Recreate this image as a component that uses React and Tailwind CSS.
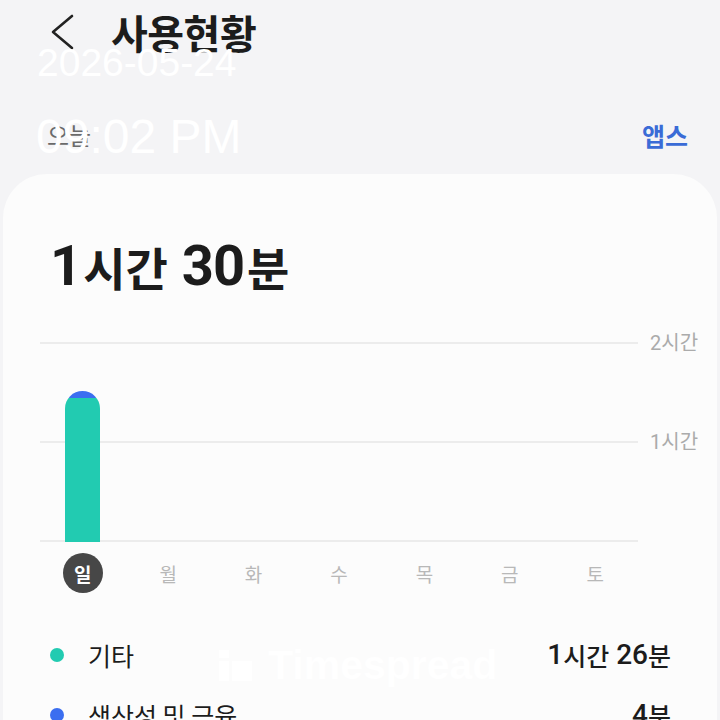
import React from "react";

const KR = { fontFamily: '"Noto Sans CJK KR", "Noto Sans", sans-serif' };

function Num({ children, className }) {
  return (
    <span className={className} style={{ fontFamily: 'Roboto, "Noto Sans CJK KR", sans-serif' }}>
      {children}
    </span>
  );
}

const days = ["일", "월", "화", "수", "목", "금", "토"];

export default function App() {
  return (
    <div
      className="relative w-[720px] h-[720px] overflow-hidden bg-[#f4f4f6] text-[#1c1c1c]"
      style={KR}
    >
      {/* header */}
      <div className="flex items-center h-[64px] pl-[50px]">
        <svg width="26" height="36" viewBox="0 0 26 36" className="shrink-0">
          <polyline
            points="22,2 3,18 22,34"
            fill="none"
            stroke="#222"
            strokeWidth="2.6"
            strokeLinecap="round"
            strokeLinejoin="round"
          />
        </svg>
        <div className="ml-[35px] text-[40px] font-bold leading-none tracking-[-0.5px]">사용현황</div>
      </div>

      {/* sub row */}
      <div className="mt-[51px] h-[40px] flex items-center justify-between pl-[47px] pr-[32px]">
        <div className="text-[24px] leading-none text-[#6a6a6a]">오늘</div>
        <div className="text-[25px] leading-none font-semibold text-[#3a6bd6]">앱스</div>
      </div>

      {/* card */}
      <div className="mt-[19px] mx-[3px] rounded-t-[44px] bg-[#fcfcfc] h-[600px]">
        <div className="pt-[64px] pl-[47px] h-[56px] box-content flex items-center font-bold leading-none">
          <Num className="text-[56px] font-bold">1</Num>
          <span className="text-[46px] ml-[1px]">시간</span>
          <Num className="text-[56px] font-bold ml-[14px] tracking-[-1px]">30</Num>
          <span className="text-[46px] ml-[3px]">분</span>
        </div>

        {/* chart */}
        <div className="mt-[48px] pl-[37px] flex">
          <div className="relative w-[598px] h-[200px]">
            <div className="absolute inset-0 flex flex-col justify-between">
              <div className="h-[2px] bg-[#ececec]" />
              <div className="h-[2px] bg-[#ececec]" />
              <div className="h-[2px] bg-[#ececec]" />
            </div>
            <div className="absolute inset-0 flex items-end">
              {days.map((d, i) => (
                <div key={d} className="flex-1 flex justify-center items-end h-full">
                  {i === 0 && (
                    <div className="w-[35px] h-[151px] rounded-t-[18px] overflow-hidden flex flex-col">
                      <div className="h-[7px] bg-[#3b6ef0]" />
                      <div className="flex-1 bg-[#22cbb1]" />
                    </div>
                  )}
                </div>
              ))}
            </div>
          </div>
          <div className="relative w-[70px] h-[200px] text-[20px] text-[#ababab] leading-none">
            <div className="absolute left-[12px] top-[-10px]">
              <Num>2</Num>시간
            </div>
            <div className="absolute left-[12px] top-[89px]">
              <Num>1</Num>시간
            </div>
          </div>
        </div>

        {/* day labels */}
        <div className="mt-[11px] pl-[37px] w-[635px] flex h-[40px]">
          {days.map((d, i) => (
            <div key={d} className="flex-1 flex justify-center items-center">
              {i === 0 ? (
                <div className="w-[40px] h-[40px] rounded-full bg-[#474747] text-white flex items-center justify-center text-[19px] font-bold leading-none">
                  {d}
                </div>
              ) : (
                <div className="text-[19px] text-[#b8b8b8] leading-none">{d}</div>
              )}
            </div>
          ))}
        </div>

        {/* legend */}
        <div className="mt-[32px] pl-[47px] pr-[46px]">
          <div className="h-[60px] flex items-center">
            <div className="w-[14px] h-[14px] rounded-full bg-[#22cbb1]" />
            <div className="ml-[24px] text-[25px] leading-none">기타</div>
            <div className="ml-auto flex items-center leading-none text-[25px] font-medium">
              <Num className="text-[28px] font-medium">1</Num>
              <span>시간</span>
              <Num className="text-[28px] font-medium ml-[7px]">26</Num>
              <span>분</span>
            </div>
          </div>
          <div className="h-[60px] flex items-center">
            <div className="w-[14px] h-[14px] rounded-full bg-[#3b6ef0]" />
            <div className="ml-[24px] text-[25px] leading-none">생산성 및 금융</div>
            <div className="ml-auto flex items-center leading-none text-[25px] font-medium">
              <Num className="text-[28px] font-medium">4</Num>
              <span>분</span>
            </div>
          </div>
        </div>
      </div>

      {/* overlays */}
      <div
        className="absolute left-[37px] top-[43px] text-[39px] leading-none text-white"
        style={{ fontFamily: '"Liberation Sans", Arial, sans-serif' }}
      >
        2026-05-24
      </div>
      <div
        className="absolute left-[36px] top-[113px] text-[48px] leading-none text-white"
        style={{ fontFamily: '"Liberation Sans", Arial, sans-serif' }}
      >
        09:02 PM
      </div>

      {/* watermark */}
      <div className="absolute left-[219px] top-[645px] flex items-center gap-[16px]">
        <svg width="33" height="31" viewBox="0 0 33 31">
          <rect x="0" y="0" width="10" height="8" fill="#ffffff" />
          <rect x="0" y="11" width="10" height="20" fill="#ffffff" />
          <rect x="13" y="11" width="20" height="20" fill="#ffffff" />
        </svg>
        <div
          className="text-[41px] font-bold leading-none text-white"
          style={{ fontFamily: '"Liberation Sans", Arial, sans-serif' }}
        >
          Timespread
        </div>
      </div>
    </div>
  );
}
